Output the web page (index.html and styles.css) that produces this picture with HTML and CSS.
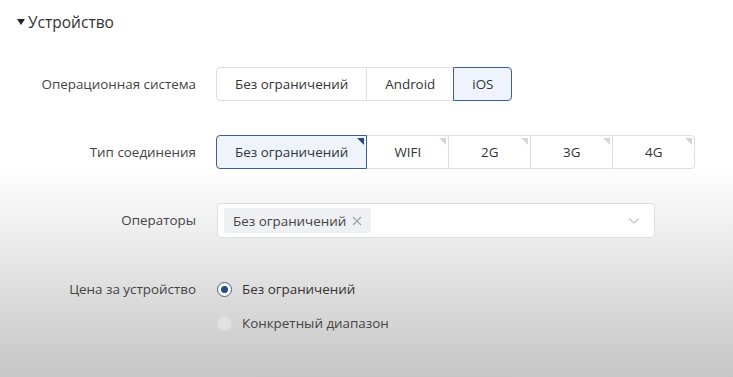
FILE: index.html
```html
<!DOCTYPE html>
<html lang="ru">
<head>
    <meta charset="UTF-8">
    <meta name="viewport" content="width=device-width, initial-scale=1.0">
    <title>Устройство</title>
    <link rel="stylesheet" href="styles.css">
</head>
<body>

    <!-- Section header -->
    <div class="section-title">
        <span class="caret"></span>
        <span>Устройство</span>
    </div>

    <div class="form">

        <div class="label">Операционная система</div>
        <div class="field">
            <div class="seg-group">
                <div class="seg">Без ограничений</div>
                <div class="seg">Android</div>
                <div class="seg active">iOS</div>
            </div>
        </div>

        <div class="label">Тип соединения</div>
        <div class="field">
            <div class="seg-group multi">
                <div class="seg active">Без ограничений</div>
                <div class="seg">WIFI</div>
                <div class="seg">2G</div>
                <div class="seg">3G</div>
                <div class="seg">4G</div>
            </div>
        </div>

        <div class="label">Операторы</div>
        <div class="field">
            <div class="select">
                <span class="tag">Без ограничений
                    <svg class="tag-close" width="10" height="10" viewBox="0 0 10 10">
                        <path d="M1 1 L9 9 M9 1 L1 9" stroke="#a0a0a0" stroke-width="1.1"/>
                    </svg>
                </span>
                <svg class="chevron" width="12" height="8" viewBox="0 0 12 8">
                    <path d="M1 1.5 L6 6 L11 1.5" fill="none" stroke="#c0c4cc" stroke-width="1.2"/>
                </svg>
            </div>
        </div>

        <div class="label">Цена за устройство</div>
        <div class="field radios">
            <label class="radio checked"><span class="dot"></span>Без ограничений</label>
            <label class="radio"><span class="dot"></span>Конкретный диапазон</label>
        </div>

    </div>

</body>
</html>
```

FILE: styles.css
```css
* {
    margin: 0;
    padding: 0;
    box-sizing: border-box;
    font-family: "Open Sans", "Noto Sans", sans-serif;
}

body {
    min-height: 100vh;
    background: linear-gradient(to bottom, #ffffff 0, #ffffff 165px, #ececec 240px, #d8d8d8 310px, #c6c6c6 377px);
    color: #333;
    font-size: 13.4px;
    padding: 12px 0 0 17px;
}

/* Header */
.section-title {
    display: flex;
    align-items: center;
    gap: 3px;
    font-size: 15.5px;
    color: #333;
    height: 20px;
}

.caret {
    width: 0;
    height: 0;
    border-left: 4px solid transparent;
    border-right: 4px solid transparent;
    border-top: 6px solid #222;
}

/* Form grid */
.form {
    display: grid;
    grid-template-columns: 179px auto;
    column-gap: 20px;
    row-gap: 34px;
    margin-top: 35px;
    align-items: start;
}

.label {
    text-align: right;
    height: 34px;
    line-height: 34px;
    color: #444;
}

.field {
    display: flex;
}

/* Segmented buttons */
.seg-group {
    display: flex;
    height: 34px;
}

.seg {
    position: relative;
    padding: 0 18px;
    line-height: 32px;
    border: 1px solid #dcdfe6;
    margin-left: -1px;
    background: #fff;
    color: #333;
    text-align: center;
}

.seg:first-child {
    margin-left: 0;
    border-radius: 4px 0 0 4px;
}

.seg:last-child {
    border-radius: 0 4px 4px 0;
}

.seg.active {
    border-color: #3d5f98;
    background: #eef3fc;
    z-index: 1;
}

.multi .seg {
    min-width: 83px;
}

.multi .seg::after {
    content: "";
    position: absolute;
    top: 2px;
    right: 2px;
    border-top: 7px solid #d6d6d6;
    border-left: 7px solid transparent;
}

.multi .seg.active::after {
    border-top-color: #2b4a7e;
}

/* Select */
.select {
    width: 438px;
    height: 35px;
    border: 1px solid #dcdfe6;
    border-radius: 4px;
    background: #fff;
    display: flex;
    align-items: center;
    justify-content: space-between;
    padding: 0 14px 0 6px;
    margin-left: 1px;
}

.tag {
    display: flex;
    align-items: center;
    background: #eef0f3;
    border-radius: 3px;
    height: 25px;
    padding: 0 9px 0 9px;
    color: #444;
}

.tag-close {
    margin-left: 6px;
}

/* Radios */
.radios {
    flex-direction: column;
}

.radio {
    display: flex;
    align-items: center;
    height: 34px;
    color: #333;
    padding-left: 1px;
}

.dot {
    width: 15px;
    height: 15px;
    border-radius: 50%;
    border: 1px solid #dcdcdc;
    background: rgba(255, 255, 255, 0.3);
    margin-right: 10px;
    display: flex;
    align-items: center;
    justify-content: center;
}

.radio.checked .dot {
    border-color: #3d5f98;
    background: #fff;
}

.radio.checked .dot::after {
    content: "";
    width: 7px;
    height: 7px;
    border-radius: 50%;
    background: #2b4a8e;
}

.radio:not(.checked) {
    color: #444;
}
```
